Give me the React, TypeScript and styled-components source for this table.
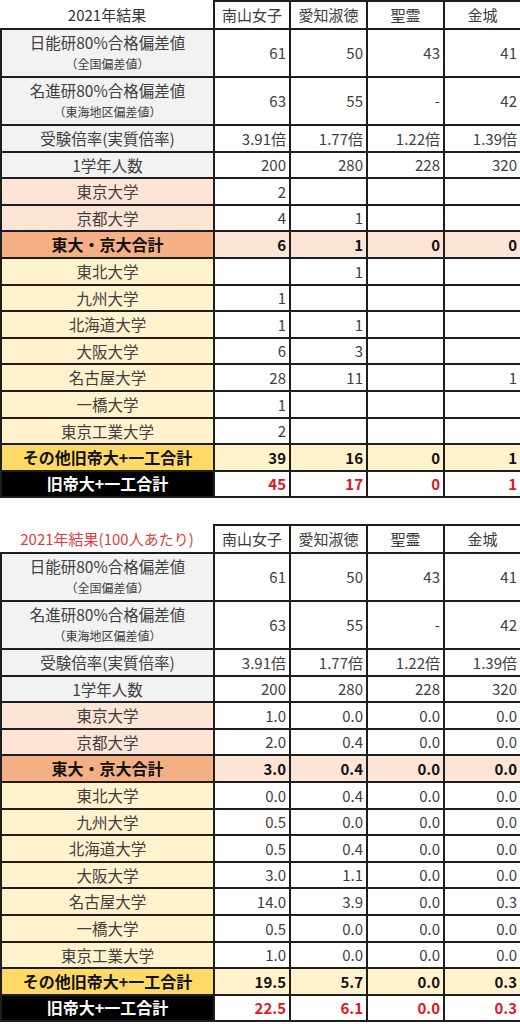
import React from 'react'
import styled, {createGlobalStyle, css} from 'styled-components'

const GlobalStyle = createGlobalStyle`
  html, body {
    margin: 0;
    padding: 0;
    background: #ffffff;
  }
  body {
    font-family: "Noto Sans CJK JP", "Noto Sans", sans-serif;
    color: #404040;
  }
`

type Kind = 'base' | 'pink' | 'pinkTotal' | 'yellow' | 'yellowTotal' | 'grand'

type Row = {
  label: string
  sub?: string
  kind: Kind
  values: string[]
  grayTop?: boolean
}

const labelBg: Record<Kind, string> = {
  base: '#f2f2f2',
  pink: '#fce4d6',
  pinkTotal: '#f4b084',
  yellow: '#fff2cc',
  yellowTotal: '#ffd966',
  grand: '#000000',
}

const valueBg: Record<Kind, string> = {
  base: '#ffffff',
  pink: '#ffffff',
  pinkTotal: '#fce4d6',
  yellow: '#ffffff',
  yellowTotal: '#fff2cc',
  grand: '#ffffff',
}

const isBold = (k: Kind) => k === 'pinkTotal' || k === 'yellowTotal' || k === 'grand'

const Page = styled.div`
  width: 520px;
  display: flex;
  flex-direction: column;
  gap: 26px;
`

const Table = styled.table`
  width: 520px;
  table-layout: fixed;
  border-collapse: collapse;
  font-size: 15px;
  line-height: 1.2;
`

const Col = styled.col<{$w: number}>`
  width: ${(p) => p.$w}px;
`

const TitleCell = styled.th<{$red?: boolean}>`
  border: none;
  height: 26px;
  padding: 0;
  font-weight: 400;
  font-size: 15px;
  text-align: center;
  color: ${(p) => (p.$red ? '#e33b3b' : '#333333')};
  white-space: nowrap;
`

const SchoolCell = styled.th`
  border: 2px solid #1e1e1e;
  height: 26px;
  padding: 0;
  font-weight: 400;
  text-align: center;
  color: #3a3a3a;
`

const BodyRow = styled.tr<{$h: number}>`
  height: ${(p) => p.$h}px;
`

const grayTopRule = css<{$grayTop?: boolean}>`
  ${(p) =>
    p.$grayTop &&
    css`
      border-top-color: #9a9a9a;
    `}
`

const LabelCell = styled.td<{$kind: Kind; $grayTop?: boolean}>`
  border: 2px solid #1e1e1e;
  ${grayTopRule}
  padding: 0;
  text-align: center;
  white-space: nowrap;
  background: ${(p) => labelBg[p.$kind]};
  color: ${(p) => (p.$kind === 'grand' ? '#ffffff' : isBold(p.$kind) ? '#111111' : '#404040')};
  font-weight: ${(p) => (isBold(p.$kind) ? 700 : 400)};
  font-size: ${(p) => (isBold(p.$kind) ? '16px' : '15.5px')};
`

const MainLabel = styled.div`
  line-height: 22px;
`

const SubLabel = styled.div`
  font-size: 12px;
  line-height: 22px;
  color: #404040;
`

const ValueCell = styled.td<{$kind: Kind; $grayTop?: boolean}>`
  border: 2px solid #1e1e1e;
  ${grayTopRule}
  padding: 0 3px 0 0;
  text-align: right;
  background: ${(p) => valueBg[p.$kind]};
  color: ${(p) => (p.$kind === 'grand' ? '#e5141e' : isBold(p.$kind) ? '#111111' : '#404040')};
  font-weight: ${(p) => (isBold(p.$kind) ? 700 : 400)};
`

const schools = ['南山女子', '愛知淑徳', '聖霊', '金城']
const colWidths = [213, 76, 77, 77, 77]
// 14 short rows share ~372px, so mix 27px and 26px rows
const shortHeights = [27, 26, 27, 26, 27, 27, 26, 27, 26, 27, 27, 26, 27, 26]

const headRows = (grayRatio: boolean): Row[] => [
  {label: '日能研80%合格偏差値', sub: '（全国偏差値）', kind: 'base', values: ['61', '50', '43', '41']},
  {
    label: '名進研80%合格偏差値',
    sub: '（東海地区偏差値）',
    kind: 'base',
    values: ['63', '55', '-', '42'],
    grayTop: true,
  },
  {label: '受験倍率(実質倍率)', kind: 'base', values: ['3.91倍', '1.77倍', '1.22倍', '1.39倍'], grayTop: grayRatio},
  {label: '1学年人数', kind: 'base', values: ['200', '280', '228', '320']},
]

const countRows: Row[] = [
  ...headRows(false),
  {label: '東京大学', kind: 'pink', values: ['2', '', '', '']},
  {label: '京都大学', kind: 'pink', values: ['4', '1', '', '']},
  {label: '東大・京大合計', kind: 'pinkTotal', values: ['6', '1', '0', '0']},
  {label: '東北大学', kind: 'yellow', values: ['', '1', '', '']},
  {label: '九州大学', kind: 'yellow', values: ['1', '', '', '']},
  {label: '北海道大学', kind: 'yellow', values: ['1', '1', '', '']},
  {label: '大阪大学', kind: 'yellow', values: ['6', '3', '', '']},
  {label: '名古屋大学', kind: 'yellow', values: ['28', '11', '', '1']},
  {label: '一橋大学', kind: 'yellow', values: ['1', '', '', '']},
  {label: '東京工業大学', kind: 'yellow', values: ['2', '', '', '']},
  {label: 'その他旧帝大+一工合計', kind: 'yellowTotal', values: ['39', '16', '0', '1']},
  {label: '旧帝大+一工合計', kind: 'grand', values: ['45', '17', '0', '1']},
]

const perHundredRows: Row[] = [
  ...headRows(true),
  {label: '東京大学', kind: 'pink', values: ['1.0', '0.0', '0.0', '0.0']},
  {label: '京都大学', kind: 'pink', values: ['2.0', '0.4', '0.0', '0.0']},
  {label: '東大・京大合計', kind: 'pinkTotal', values: ['3.0', '0.4', '0.0', '0.0']},
  {label: '東北大学', kind: 'yellow', values: ['0.0', '0.4', '0.0', '0.0']},
  {label: '九州大学', kind: 'yellow', values: ['0.5', '0.0', '0.0', '0.0']},
  {label: '北海道大学', kind: 'yellow', values: ['0.5', '0.4', '0.0', '0.0']},
  {label: '大阪大学', kind: 'yellow', values: ['3.0', '1.1', '0.0', '0.0']},
  {label: '名古屋大学', kind: 'yellow', values: ['14.0', '3.9', '0.0', '0.3']},
  {label: '一橋大学', kind: 'yellow', values: ['0.5', '0.0', '0.0', '0.0']},
  {label: '東京工業大学', kind: 'yellow', values: ['1.0', '0.0', '0.0', '0.0']},
  {label: 'その他旧帝大+一工合計', kind: 'yellowTotal', values: ['19.5', '5.7', '0.0', '0.3']},
  {label: '旧帝大+一工合計', kind: 'grand', values: ['22.5', '6.1', '0.0', '0.3']},
]

const ResultTable = ({title, red, rows}: {title: string; red?: boolean; rows: Row[]}) => {
  let shortIndex = 0
  return (
    <Table>
      <colgroup>
        {colWidths.map((w, i) => (
          <Col key={i} $w={w} />
        ))}
      </colgroup>
      <thead>
        <tr>
          <TitleCell $red={red}>{title}</TitleCell>
          {schools.map((s) => (
            <SchoolCell key={s}>{s}</SchoolCell>
          ))}
        </tr>
      </thead>
      <tbody>
        {rows.map((r) => {
          const h = r.sub ? 48 : shortHeights[shortIndex++ % shortHeights.length]
          return (
            <BodyRow key={r.label} $h={h}>
              <LabelCell $kind={r.kind} $grayTop={r.grayTop}>
                {r.sub ? (
                  <>
                    <MainLabel>{r.label}</MainLabel>
                    <SubLabel>{r.sub}</SubLabel>
                  </>
                ) : (
                  r.label
                )}
              </LabelCell>
              {r.values.map((v, i) => (
                <ValueCell key={i} $kind={r.kind} $grayTop={r.grayTop}>
                  {v}
                </ValueCell>
              ))}
            </BodyRow>
          )
        })}
      </tbody>
    </Table>
  )
}

export default function App() {
  return (
    <>
      <GlobalStyle />
      <Page>
        <ResultTable title="2021年結果" rows={countRows} />
        <ResultTable title="2021年結果(100人あたり)" red rows={perHundredRows} />
      </Page>
    </>
  )
}
